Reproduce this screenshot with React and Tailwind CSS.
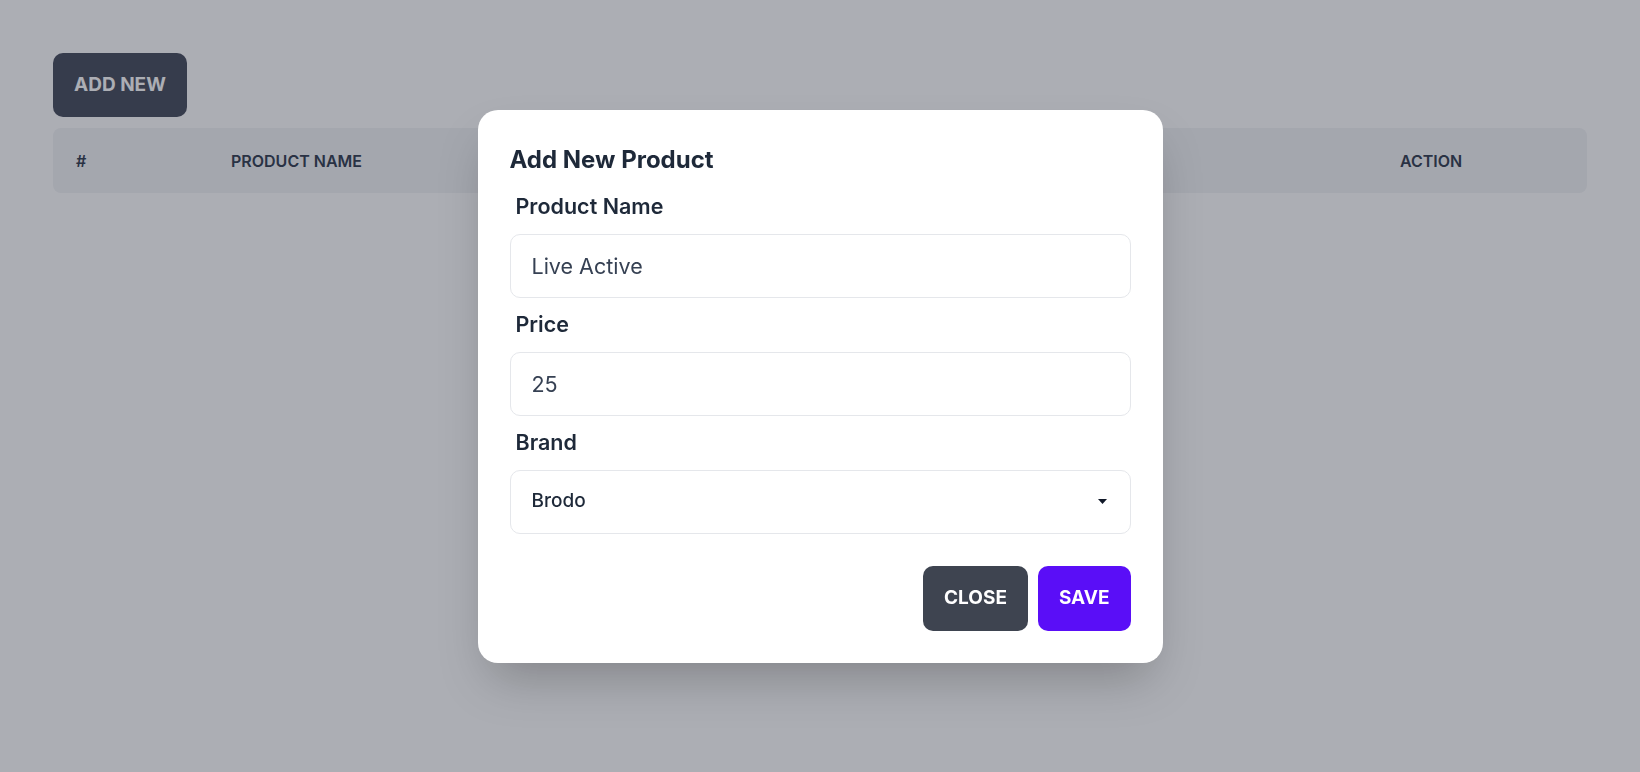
import React from "react";

const columns = ["#", "Product Name", "Price", "Brand", "Action"];

/* label + control wrapper used by the modal form */
const Field = ({ label, children }) => (
  <div className="mt-3 first:mt-0">
    <label className="block px-1.5 mb-[14px] text-[21.5px] leading-7 font-semibold text-gray-800">
      {label}
    </label>
    {children}
  </div>
);

const TextInput = ({ value }) => (
  <input
    type="text"
    defaultValue={value}
    className="w-full h-16 px-[21px] rounded-[10px] border border-gray-200 bg-white text-[21.5px] text-gray-700 outline-none"
  />
);

const BrandSelect = ({ value }) => (
  <div className="w-full h-16 pl-[21px] pr-[23px] rounded-[10px] border border-gray-200 bg-white flex items-center justify-between">
    <span className="text-[19px] font-medium text-gray-800">{value}</span>
    <svg width="9" height="5" viewBox="0 0 9 5" className="text-gray-900">
      <path d="M0 0h9L4.5 5z" fill="currentColor" />
    </svg>
  </div>
);

const ProductModal = () => (
  <div className="fixed inset-0 bg-[#111827]/35 flex items-center justify-center">
    <div className="w-[685px] bg-white rounded-[20px] shadow-2xl px-8 pt-[34px] pb-8">
      <h2 className="text-[24px] leading-8 font-bold text-gray-800 mb-4">
        Add New Product
      </h2>

      <Field label="Product Name">
        <TextInput value="Live Active" />
      </Field>
      <Field label="Price">
        <TextInput value="25" />
      </Field>
      <Field label="Brand">
        <BrandSelect value="Brodo" />
      </Field>

      <div className="flex justify-end gap-2.5 mt-8">
        <button className="h-[65px] px-[21px] rounded-[10px] bg-[#3e4450] text-white text-[19px] font-bold">
          CLOSE
        </button>
        <button className="h-[65px] px-[21px] rounded-[10px] bg-[#5a0ef7] text-white text-[19px] font-bold">
          SAVE
        </button>
      </div>
    </div>
  </div>
);

export default function App() {
  return (
    <div
      className="min-h-[772px] bg-white px-[53px] pt-[53px]"
      style={{ fontFamily: "Inter, 'Noto Sans', sans-serif" }}
    >
      <button className="h-16 px-[21px] rounded-[10px] bg-[#4b5060] text-white text-[19px] font-bold">
        ADD NEW
      </button>

      <div className="mt-[11px] h-[65px] rounded-lg bg-gray-100 grid grid-cols-[155px_1fr_1fr_1fr_210px] items-center">
        {columns.map((c) => (
          <div key={c} className="pl-[23px] text-base font-semibold uppercase text-gray-700">
            {c}
          </div>
        ))}
      </div>

      <ProductModal />
    </div>
  );
}
